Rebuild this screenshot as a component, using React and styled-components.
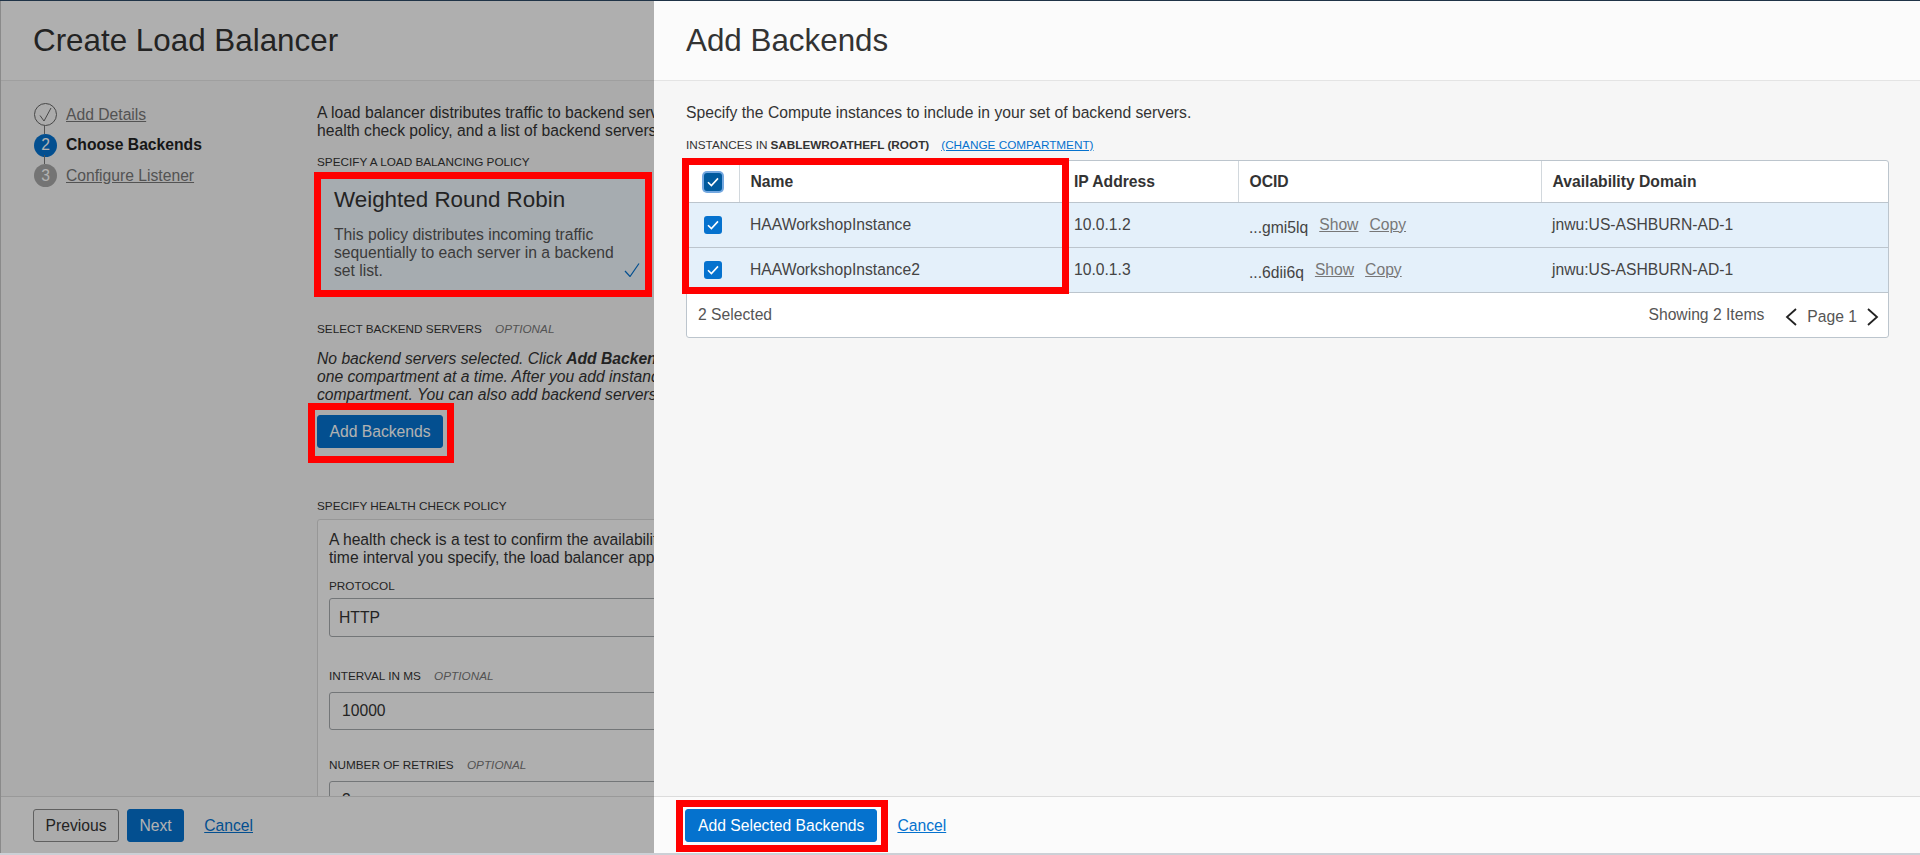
import React from 'react';
import styled, { createGlobalStyle } from 'styled-components';

const GlobalStyle = createGlobalStyle`
  html, body {
    margin: 0;
    padding: 0;
    height: 100%;
    overflow: hidden;
    background: #fff;
  }
  body {
    font-family: "Liberation Sans", Arial, sans-serif;
    font-size: 15.68px;
    line-height: 18px;
    color: #333;
  }
`;

const Screen = styled.div`
  width: 1920px;
  height: 855px;
  display: flex;
  flex-direction: column;
  overflow: hidden;
  border-top: 1px solid #1f3347;
  border-bottom: 2px solid #ccd0d6;
  box-sizing: border-box;
`;

const Workspace = styled.div`
  flex: 1;
  min-height: 0;
  display: flex;
`;

const PagePanel = styled.section`
  position: relative;
  width: 654px;
  flex: none;
  display: flex;
  flex-direction: column;
  overflow: hidden;
  border-left: 1px solid #8a8a8a;
  box-sizing: border-box;
  background: #f5f5f5;
  &::after {
    content: '';
    position: absolute;
    inset: 0;
    background: rgba(0, 0, 0, 0.3);
    z-index: 1;
  }
`;

const DrawerPanel = styled.section`
  flex: 1;
  min-width: 0;
  display: flex;
  flex-direction: column;
  background: #f6f6f6;
`;

const Header = styled.header`
  height: 80px;
  flex: none;
  box-sizing: border-box;
  display: flex;
  align-items: center;
  background: #fbfbfb;
  border-bottom: 1px solid #e4e4e4;
  padding-left: 32px;
`;

const Title = styled.h1`
  margin: 0;
  font-size: 31.36px;
  line-height: 36px;
  font-weight: 400;
  color: #333;
`;

const PageBody = styled.div`
  flex: 1;
  min-height: 0;
  display: flex;
  overflow: hidden;
`;

const Steps = styled.ol`
  width: 316px;
  flex: none;
  box-sizing: border-box;
  margin: 0;
  padding: 22px 0 0 33px;
  list-style: none;
  display: flex;
  flex-direction: column;
  gap: 7.5px;
`;

const Step = styled.li`
  display: flex;
  align-items: center;
  gap: 9px;
  height: 23px;
  white-space: nowrap;
`;

const StepDot = styled.span`
  position: relative;
  width: 23px;
  height: 23px;
  box-sizing: border-box;
  flex: none;
  border-radius: 50%;
  display: flex;
  align-items: center;
  justify-content: center;
  font-size: 15.68px;
  color: #fff;
  background: ${(p) => (p.$state === 'current' ? '#0572ce' : p.$state === 'todo' ? '#a6a6a6' : 'transparent')};
  border: ${(p) => (p.$state === 'done' ? '1px solid #666' : 'none')};
  &::before {
    content: '';
    display: ${(p) => (p.$first ? 'none' : 'block')};
    position: absolute;
    left: 10px;
    top: -9px;
    width: 1px;
    height: 9px;
    background: #777;
  }
`;

const StepLink = styled.a`
  color: #777;
  text-decoration: underline;
`;

const StepCurrent = styled.span`
  color: #222;
  font-weight: 700;
`;

const Form = styled.div`
  flex: 1;
  min-width: 0;
  padding-top: 23px;
  white-space: nowrap;
`;

const Line = styled.div`
  height: 18px;
  color: ${(p) => (p.$muted ? '#555' : '#333')};
  font-style: ${(p) => (p.$italic ? 'italic' : 'normal')};
`;

const Notice = styled.div`
  margin-top: 14px;
`;

const FieldLabel = styled.div`
  height: 14px;
  line-height: 14px;
  font-size: 11.76px;
  color: #333;
  margin-top: ${(p) => p.$top}px;
  & em {
    margin-left: 10px;
    color: #777;
  }
`;

const PolicyCard = styled.div`
  position: relative;
  width: 332px;
  height: 117px;
  box-sizing: border-box;
  margin-top: 7px;
  padding: 11px 0 0 17px;
  background: #eef6fc;
`;

const PolicyName = styled.div`
  font-size: 22.4px;
  line-height: 26px;
  color: #333;
  margin-bottom: 13px;
`;

const PolicyCheck = styled.svg`
  position: absolute;
  right: 9px;
  bottom: 16px;
  width: 16px;
  height: 14px;
`;

/* red annotation frames drawn over the screenshot */
const Mark = styled.div`
  position: absolute;
  top: ${(p) => p.$t}px;
  left: ${(p) => p.$l}px;
  width: ${(p) => p.$w}px;
  height: ${(p) => p.$h}px;
  box-sizing: border-box;
  border: 7px solid #ff0000;
  z-index: 2;
  pointer-events: none;
`;

const Button = styled.button`
  position: relative;
  height: 33px;
  box-sizing: border-box;
  padding: 0 ${(p) => p.$pad || 11.5}px;
  margin-left: ${(p) => p.$gap || 0}px;
  font: inherit;
  border-radius: 3px;
  color: ${(p) => (p.$primary ? '#fff' : '#333')};
  background: ${(p) => (p.$primary ? '#0572ce' : '#f5f5f5')};
  border: 1px solid ${(p) => (p.$primary ? '#0572ce' : '#8a8a8a')};
`;

const AddButtonRow = styled.div`
  margin-top: 11px;
`;

const HealthPanel = styled.div`
  width: 600px;
  box-sizing: border-box;
  margin-top: 6px;
  padding: 11px 0 0 11px;
  border: 1px solid #d9d9d9;
  border-radius: 3px;
  background: #fbfbfb;
`;

const TextField = styled.div`
  width: 560px;
  height: ${(p) => p.$h}px;
  box-sizing: border-box;
  margin-top: ${(p) => p.$top}px;
  padding-left: ${(p) => p.$pad}px;
  display: flex;
  align-items: center;
  border: 1px solid #a5a9ad;
  border-radius: 3px;
  color: #333;
`;

const Footer = styled.footer`
  height: 57px;
  flex: none;
  box-sizing: border-box;
  display: flex;
  align-items: flex-start;
  padding: 12px 0 0 ${(p) => p.$inset}px;
  background: #fbfbfb;
  border-top: 1px solid #dcdcdc;
  position: relative;
`;

const FooterLink = styled.a`
  margin-left: ${(p) => p.$gap}px;
  line-height: 33px;
  color: #0572ce;
  text-decoration: underline;
`;

const DrawerBody = styled.div`
  flex: 1;
  min-height: 0;
  padding: 23px 31px 0 32px;
`;

const TableHeading = styled.div`
  margin-top: 16px;
  height: 14px;
  line-height: 14px;
  font-size: 11.76px;
  color: #333;
  display: flex;
  & b {
    margin-left: 3px;
  }
`;

const ChangeLink = styled.a`
  margin-left: 12px;
  color: #0572ce;
  text-decoration: underline;
`;

const TableCard = styled.div`
  position: relative;
  margin-top: 8px;
  box-sizing: border-box;
  height: 178px;
  background: #fff;
  border: 1px solid #bcc5cd;
  border-radius: 3px;
`;

const Table = styled.table`
  width: 100%;
  border-collapse: collapse;
  table-layout: fixed;
`;

const HeadCell = styled.th`
  height: 41px;
  box-sizing: border-box;
  padding: 2px 11px 0;
  text-align: left;
  font-weight: 700;
  color: #333;
  border-bottom: 1px solid #bcc5cd;
  border-left: ${(p) => (p.$plain ? 'none' : '1px solid #d2d8dd')};
`;

const Row = styled.tr`
  background: #e4f0fa;
`;

const Cell = styled.td`
  height: 45px;
  box-sizing: border-box;
  padding: 0 11px;
  color: #444;
  border-bottom: 1px solid #bcc5cd;
`;

const CheckCell = styled.div`
  display: flex;
  justify-content: center;
`;

const Check = styled.span`
  width: 18px;
  height: 18px;
  border-radius: 3px;
  display: flex;
  align-items: center;
  justify-content: center;
  background: ${(p) => (p.$focus ? '#005a9e' : '#0572ce')};
  box-shadow: ${(p) => (p.$focus ? '0 0 0 2px #74a8e0' : 'none')};
`;

const Ocid = styled.div`
  display: flex;
  align-items: center;
  white-space: nowrap;
`;

const OcidValue = styled.span`
  padding-top: 6px;
  margin-right: 11px;
`;

const OcidAction = styled.a`
  margin-right: 11px;
  color: #777;
  text-decoration: underline;
`;

const TableFooter = styled.div`
  height: 44px;
  display: flex;
  align-items: center;
  justify-content: space-between;
  padding: 0 9px 12px 11px;
  color: #555;
`;

const Pager = styled.div`
  display: flex;
  align-items: center;
`;

const PagerArrow = styled.svg`
  width: 12px;
  height: 18px;
  margin: ${(p) => p.$margin};
  padding-top: 5px;
`;

const PageLabel = styled.span`
  padding-top: 4px;
`;

const Tick = () => (
  <svg width="12" height="10" viewBox="0 0 12 10">
    <path d="M1 5.2 4.4 8.6 11 1.4" fill="none" stroke="#fff" strokeWidth="1.6" />
  </svg>
);

const Arrow = ({ points, margin }) => (
  <PagerArrow viewBox="0 0 12 18" $margin={margin}>
    <polyline points={points} fill="none" stroke="#222" strokeWidth="1.8" />
  </PagerArrow>
);

const rows = [
  { name: 'HAAWorkshopInstance', ip: '10.0.1.2', ocid: '...gmi5lq' },
  { name: 'HAAWorkshopInstance2', ip: '10.0.1.3', ocid: '...6dii6q' },
];

const columns = [52, 324, 175, 303, 347];

export default function App() {
  return (
    <Screen>
      <GlobalStyle />
      <Workspace>
        <PagePanel>
          <Header><Title>Create Load Balancer</Title></Header>
          <PageBody>
            <Steps>
              <Step>
                <StepDot $state="done" $first>
                  <svg width="13" height="15" viewBox="0 0 13 15">
                    <path d="M1 8.5 5 14 12 1" fill="none" stroke="#666" strokeWidth="1" />
                  </svg>
                </StepDot>
                <StepLink>Add Details</StepLink>
              </Step>
              <Step>
                <StepDot $state="current">2</StepDot>
                <StepCurrent>Choose Backends</StepCurrent>
              </Step>
              <Step>
                <StepDot $state="todo">3</StepDot>
                <StepLink>Configure Listener</StepLink>
              </Step>
            </Steps>
            <Form>
              <Line>A load balancer distributes traffic to backend servers within a virtual cloud network. You specify a policy,</Line>
              <Line>health check policy, and a list of backend servers for your load balancer.</Line>
              <FieldLabel $top={15}>SPECIFY A LOAD BALANCING POLICY</FieldLabel>
              <PolicyCard>
                <Mark $t={-4} $l={-3} $w={338} $h={125} />
                <PolicyName>Weighted Round Robin</PolicyName>
                <Line $muted>This policy distributes incoming traffic</Line>
                <Line $muted>sequentially to each server in a backend</Line>
                <Line $muted>set list.</Line>
                <PolicyCheck viewBox="0 0 16 14">
                  <path d="M1 8 6 13.5 15 .5" fill="none" stroke="#0572ce" strokeWidth="1.2" />
                </PolicyCheck>
              </PolicyCard>
              <FieldLabel $top={29}>SELECT BACKEND SERVERS <em>OPTIONAL</em></FieldLabel>
              <Notice>
                <Line $italic>No backend servers selected. Click <b>Add Backends</b> to choose instances from</Line>
                <Line $italic>one compartment at a time. After you add instances, you can add more from another</Line>
                <Line $italic>compartment. You can also add backend servers later.</Line>
              </Notice>
              <AddButtonRow>
                <Button $primary>
                  Add Backends
                  <Mark $t={-13} $l={-10} $w={146} $h={60} />
                </Button>
              </AddButtonRow>
              <FieldLabel $top={51}>SPECIFY HEALTH CHECK POLICY</FieldLabel>
              <HealthPanel>
                <Line>A health check is a test to confirm the availability of backend servers. At the</Line>
                <Line>time interval you specify, the load balancer applies the check to each server.</Line>
                <FieldLabel $top={12}>PROTOCOL</FieldLabel>
                <TextField $h={39} $top={5} $pad={9}>HTTP</TextField>
                <FieldLabel $top={32}>INTERVAL IN MS <em>OPTIONAL</em></FieldLabel>
                <TextField $h={38} $top={9} $pad={12}>10000</TextField>
                <FieldLabel $top={28}>NUMBER OF RETRIES <em>OPTIONAL</em></FieldLabel>
                <TextField $h={38} $top={9} $pad={12}>3</TextField>
              </HealthPanel>
            </Form>
          </PageBody>
          <Footer $inset={32}>
            <Button>Previous</Button>
            <Button $primary $gap={8}>Next</Button>
            <FooterLink $gap={20}>Cancel</FooterLink>
          </Footer>
        </PagePanel>

        <DrawerPanel>
          <Header><Title>Add Backends</Title></Header>
          <DrawerBody>
            <Line>Specify the Compute instances to include in your set of backend servers.</Line>
            <TableHeading>
              INSTANCES IN <b>SABLEWROATHEFL (ROOT)</b>
              <ChangeLink>(CHANGE COMPARTMENT)</ChangeLink>
            </TableHeading>
            <TableCard>
              <Mark $t={-3} $l={-5} $w={387} $h={136} />
              <Table>
                <colgroup>
                  {columns.map((w) => <col key={w} width={w} />)}
                </colgroup>
                <thead>
                  <tr>
                    <HeadCell $plain><CheckCell><Check $focus><Tick /></Check></CheckCell></HeadCell>
                    <HeadCell>Name</HeadCell>
                    <HeadCell $plain>IP Address</HeadCell>
                    <HeadCell>OCID</HeadCell>
                    <HeadCell>Availability Domain</HeadCell>
                  </tr>
                </thead>
                <tbody>
                  {rows.map((row) => (
                    <Row key={row.name}>
                      <Cell><CheckCell><Check><Tick /></Check></CheckCell></Cell>
                      <Cell>{row.name}</Cell>
                      <Cell>{row.ip}</Cell>
                      <Cell>
                        <Ocid>
                          <OcidValue>{row.ocid}</OcidValue>
                          <OcidAction>Show</OcidAction>
                          <OcidAction>Copy</OcidAction>
                        </Ocid>
                      </Cell>
                      <Cell>jnwu:US-ASHBURN-AD-1</Cell>
                    </Row>
                  ))}
                </tbody>
              </Table>
              <TableFooter>
                <span>2 Selected</span>
                <Pager>
                  <span>Showing 2 Items</span>
                  <Arrow points="11,1 2,9 11,17" margin="0 10px 0 21px" />
                  <PageLabel>Page 1</PageLabel>
                  <Arrow points="1,1 10,9 1,17" margin="0 0 0 10px" />
                </Pager>
              </TableFooter>
            </TableCard>
          </DrawerBody>
          <Footer $inset={31}>
            <Button $primary $pad={12}>
              Add Selected Backends
              <Mark $t={-10} $l={-10} $w={212} $h={52} />
            </Button>
            <FooterLink $gap={20}>Cancel</FooterLink>
          </Footer>
        </DrawerPanel>
      </Workspace>
    </Screen>
  );
}
